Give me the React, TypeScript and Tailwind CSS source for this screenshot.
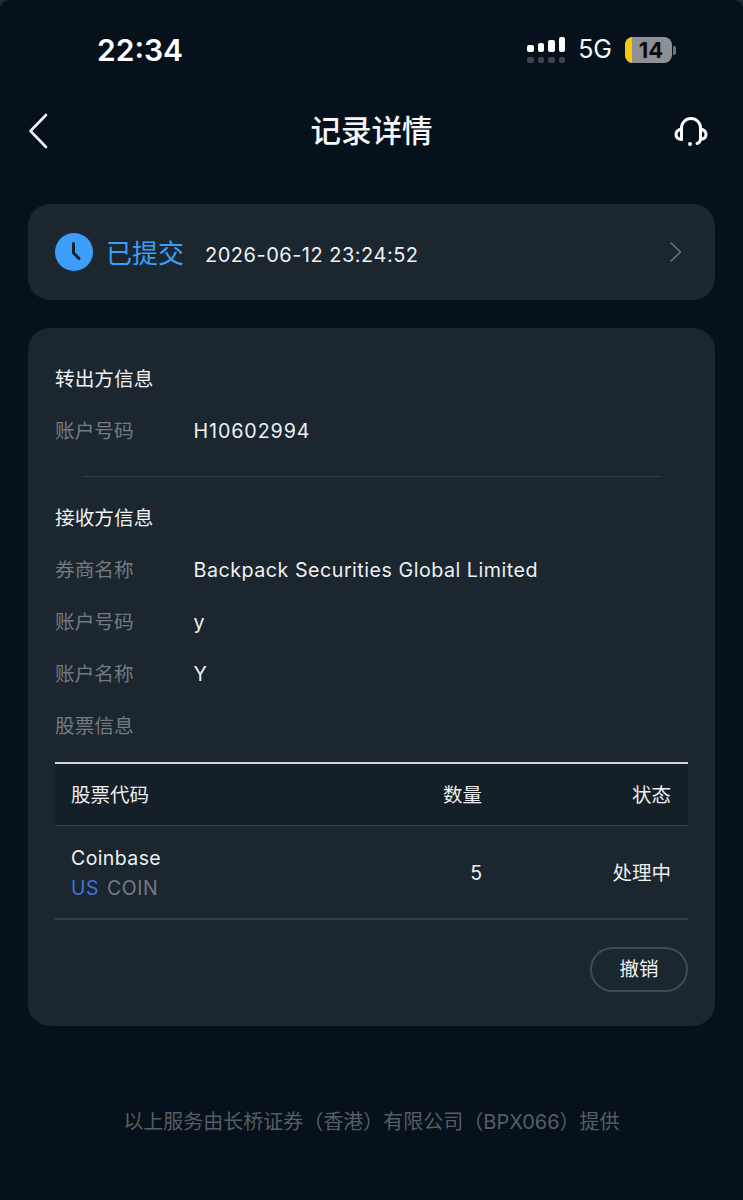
import React from "react";

const font = { fontFamily: 'Inter, "Noto Sans CJK SC", sans-serif' };

function Row({ label, value, track = "tracking-[0.5px]" }: { label: string; value: string; track?: string }) {
  return (
    <div className="flex h-[52px] items-center text-[19.7px]">
      <span className="w-[138.5px] text-[#737a81]">{label}</span>
      <span className={`text-[#eef0f2] ${track}`}>{value}</span>
    </div>
  );
}

function Signal() {
  const hs = [7, 9, 12, 15];
  return (
    <div className="flex flex-col gap-[5px]">
      <div className="flex items-end gap-[4px]">
        {hs.map((h) => (
          <div key={h} className="w-[6.5px] rounded-[2px] bg-white" style={{ height: h }} />
        ))}
      </div>
      <div className="flex gap-[4px]">
        {hs.map((h) => (
          <div key={h} className="h-[6px] w-[6.5px] rounded-[2px] bg-[#3c444d]" />
        ))}
      </div>
    </div>
  );
}

function Battery() {
  return (
    <div className="flex items-center gap-[1px]">
      <div className="flex h-[26px] w-[47px] overflow-hidden rounded-[8px] bg-[#8e9093]">
        <div className="h-full w-[7px] bg-[#f5c90f]" />
        <span className="flex-1 pr-[2px] text-center text-[22px] font-bold leading-[26px] text-[#0a0d10]">14</span>
      </div>
      <div className="h-[9px] w-[3px] rounded-r-[2px] bg-[#6f7378]" />
    </div>
  );
}

export default function App() {
  return (
    <div className="h-[1200px] w-[743px] overflow-hidden bg-[#1c2a36]">
      <div className="h-[1200px] w-[743px] overflow-hidden rounded-t-[9px] bg-[#07111b] text-white" style={font}>
        <div className="flex h-[100px] items-center justify-between pl-[97px] pr-[67px]">
          <span className="text-[30px] font-semibold">22:34</span>
          <div className="flex items-center">
            <Signal />
            <span className="ml-[13px] text-[25px] text-[#f5f6f7]">5G</span>
            <div className="ml-[13px]">
              <Battery />
            </div>
          </div>
        </div>

        <div className="flex h-[62px] items-center justify-between pl-[28px] pr-[35px]">
          <div className="w-[41px]">
            <svg width="20" height="36" viewBox="0 0 20 36" fill="none">
              <path d="M18 2 L2.5 18 L18 34" stroke="#f4f5f6" strokeWidth="2.6" strokeLinecap="round" strokeLinejoin="round" />
            </svg>
          </div>
          <span className="text-[30.5px] font-medium text-[#f5f6f7]">记录详情</span>
          <svg className="mt-[2px]" width="34" height="34" viewBox="0 0 34 34" fill="none" stroke="#fff" strokeWidth="3" strokeLinecap="round">
            <path d="M7.5 24 V13 A9.5 9.5 0 0 1 26.5 13 V23" />
            <path d="M7.5 14 C3.5 15 2 17.5 2 19.5 C2 22 4 24 7.5 24.5" />
            <path d="M26.5 14 C30.5 15 32 17.5 32 19.5 C32 22 30 24 26.5 24.5 C26 27 25 28 23 28.5" />
            <circle cx="16" cy="29" r="2" fill="#fff" stroke="none" />
          </svg>
        </div>

        <div className="mx-[28px] mt-[42px] flex h-[96px] items-center rounded-[22px] bg-[#1b262e] pl-[27px] pr-[33px]">
          <svg width="38" height="38" viewBox="0 0 38 38">
            <circle cx="19" cy="19" r="19" fill="#3c9dfa" />
            <path d="M18.5 10.5 V20 L24 25.5" fill="none" stroke="#14202c" strokeWidth="3" strokeLinecap="round" strokeLinejoin="round" />
          </svg>
          <span className="ml-[13px] pt-[3px] text-[26px] text-[#3c9dfa]">已提交</span>
          <span className="ml-[21px] pt-[5px] text-[20px] tracking-[0.5px] text-[#eef0f2]">2026-06-12 23:24:52</span>
          <svg className="ml-auto" width="13" height="22" viewBox="0 0 13 22" fill="none">
            <path d="M2 2 L11.5 11 L2 20" stroke="#6b7279" strokeWidth="1.6" strokeLinecap="round" strokeLinejoin="round" />
          </svg>
        </div>

        <div className="mx-[28px] mt-[28px] h-[698px] rounded-[22px] bg-[#1b262e] px-[27px] pt-[26px]">
          <div className="flex h-[52px] items-center text-[19.7px] text-[#f0f2f4]">转出方信息</div>
          <Row label="账户号码" value="H10602994" track="tracking-[0.9px]" />
          <div className="mx-[28px] mt-[18px] h-px bg-[#353f47]" />
          <div className="mt-[16px] flex h-[52px] items-center text-[19.7px] text-[#f0f2f4]">接收方信息</div>
          <Row label="券商名称" value="Backpack Securities Global Limited" />
          <Row label="账户号码" value="y" />
          <Row label="账户名称" value="Y" />
          <Row label="股票信息" value="" />

          <div className="mt-[9px] border-t-2 border-[#d3d5d8]">
            <div className="flex h-[62px] items-center border-b border-[#353f47] bg-[#151f27] pl-[16px] pr-[17px] pt-[2px] text-[19.5px] text-[#eceef0]">
              <span className="flex-1">股票代码</span>
              <span className="w-[40px] text-right">数量</span>
              <span className="w-[189px] text-right">状态</span>
            </div>
            <div className="flex h-[94px] items-center border-b-2 border-[#333d45] pl-[16px] pr-[17px] pt-[3px] text-[19.5px]">
              <div className="flex-1 text-[#eef0f2]">
                <div className="leading-[30px] tracking-[0.4px]">Coinbase</div>
                <div className="leading-[31px] tracking-[0.5px]">
                  <span className="text-[#4273dc]">US</span> <span className="ml-[2px] text-[#737a81]">COIN</span>
                </div>
              </div>
              <span className="w-[40px] text-right text-[#eef0f2]">5</span>
              <span className="w-[189px] text-right text-[#eef0f2]">处理中</span>
            </div>
          </div>

          <div className="mt-[27px] flex justify-end">
            <button className="flex h-[45px] w-[98px] items-center justify-center rounded-full border-2 border-[#3f4a52] text-[19.5px] text-[#eef0f2]">
              撤销
            </button>
          </div>
        </div>

        <div className="mt-[81px] text-center text-[20px] text-[#565d64]">以上服务由长桥证券（香港）有限公司（BPX066）提供</div>
      </div>
    </div>
  );
}
